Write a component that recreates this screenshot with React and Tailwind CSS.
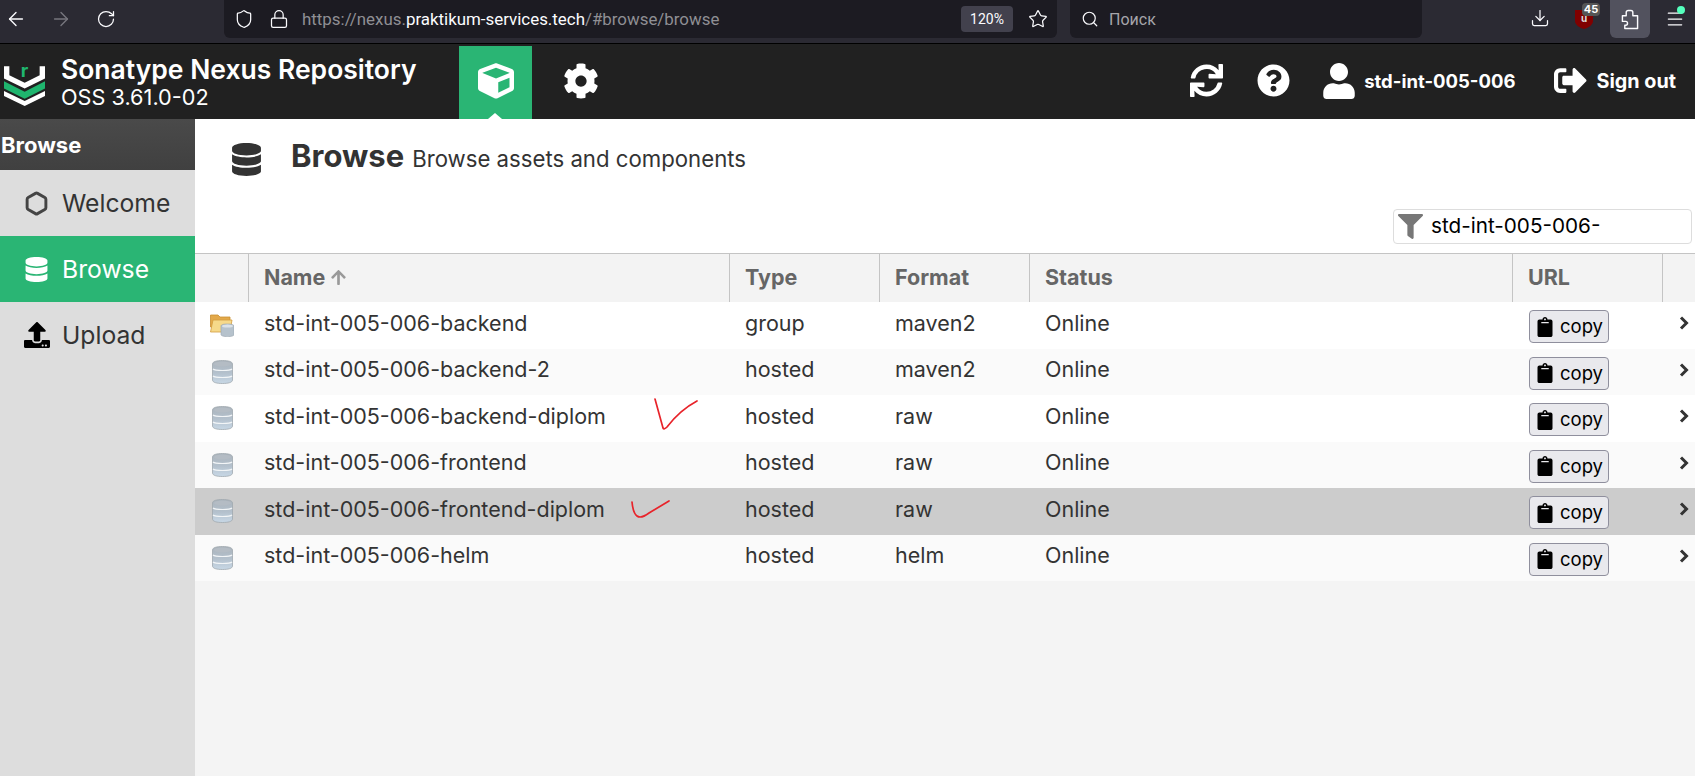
import React from "react";
import { ArrowLeft, ArrowRight, RotateCw, Shield, Lock, Star, Search, Download, Menu, Hexagon } from "lucide-react";
import { FaCube, FaCog, FaSync, FaQuestionCircle, FaUser, FaSignOutAlt, FaDatabase, FaUpload, FaFilter, FaClipboard, FaArrowUp } from "react-icons/fa";

const rows = [
  { name: "std-int-005-006-backend", type: "group", format: "maven2", bg: "bg-white", folder: true },
  { name: "std-int-005-006-backend-2", type: "hosted", format: "maven2", bg: "bg-[#fafafa]" },
  { name: "std-int-005-006-backend-diplom", type: "hosted", format: "raw", bg: "bg-white", check: 1 },
  { name: "std-int-005-006-frontend", type: "hosted", format: "raw", bg: "bg-[#fafafa]" },
  { name: "std-int-005-006-frontend-diplom", type: "hosted", format: "raw", bg: "bg-[#cccccc]", check: 2 },
  { name: "std-int-005-006-helm", type: "hosted", format: "helm", bg: "bg-[#fafafa]" },
];

function Logo() {
  return (
    <svg viewBox="12 185 115 130" preserveAspectRatio="none" className="w-[41px] h-[43px] mt-[5px] overflow-visible">
      <polygon fill="#fff" points="12,195 27,195 27,222 70,245 112,222 112,195 127,195 127,232 70,262 12,232" />
      <polygon fill="#1fb56e" points="12,240 70,272 127,240 127,262 70,293 12,262" />
      <polygon fill="#fff" points="12,270 70,300 127,270 127,285 70,315 12,285" />
      <text x="59" y="226" fontSize="52" fontWeight="700" fill="#1fb56e" fontFamily="Inter, sans-serif">r</text>
    </svg>
  );
}

function DbIcon() {
  return (
    <svg viewBox="0 0 21 24" className="w-[21px] h-[24px]">
      <defs>
        <linearGradient id="dbg" x1="0" y1="0" x2="0" y2="1">
          <stop offset="0" stopColor="#aab3bb" />
          <stop offset="0.55" stopColor="#b4c1cd" />
          <stop offset="1" stopColor="#c8d8e6" />
        </linearGradient>
      </defs>
      <path d="M0.5 4C0.5 1.5 5 0.5 10.5 0.5S20.5 1.5 20.5 4V20C20.5 22.5 16 23.5 10.5 23.5S0.5 22.5 0.5 20Z" fill="url(#dbg)" stroke="#a0a8ae" strokeWidth="0.8" />
      <path d="M1 9C3 11 18 11 20 9M1 16C3 18 18 18 20 16" fill="none" stroke="#f2f5f7" strokeWidth="1.2" />
      <ellipse cx="10.5" cy="4" rx="8.5" ry="2.4" fill="#b4bcc4" />
    </svg>
  );
}

function FolderIcon() {
  return (
    <svg viewBox="0 0 24 24" className="w-[24px] h-[24px]">
      <path d="M0.5 2H8L10 4H20V14H0.5Z" fill="#e3a94a" stroke="#c98f33" strokeWidth="0.8" />
      <path d="M0.5 19L3 7H22L20 19Z" fill="#f6d98a" stroke="#d39c3f" strokeWidth="0.8" />
      <path d="M11 13C11 11.5 14 11 17.5 11S24 11.5 24 13V21.5C24 23 21 23.6 17.5 23.6S11 23 11 21.5Z" fill="#b6c2cc" stroke="#98a4ae" strokeWidth="0.6" />
      <ellipse cx="17.5" cy="13" rx="5.5" ry="1.6" fill="#dbe2e8" />
    </svg>
  );
}

function Check({ kind }) {
  if (kind === 1) {
    return (
      <svg viewBox="0 0 50 40" className="absolute left-[455px] top-0 w-[50px] h-[40px]">
        <path d="M5 4L13 33Q14 35 17 32Q30 15 47 6" fill="none" stroke="#e8232a" strokeWidth="1.7" strokeLinecap="round" />
      </svg>
    );
  }
  return (
    <svg viewBox="0 0 50 40" className="absolute left-[430px] top-0 w-[50px] h-[40px]">
      <path d="M7 14Q8 25 12 28Q16 31 24 25Q34 19 44 13" fill="none" stroke="#e8232a" strokeWidth="1.7" strokeLinecap="round" />
    </svg>
  );
}

function Row({ r }) {
  return (
    <div className={`relative grid grid-cols-[53px_481px_150px_150px_483px_150px_1fr] h-[46.5px] text-[21.5px] text-[#333] ${r.bg}`}>
      <div className="flex items-center justify-center pl-px">{r.folder ? <FolderIcon /> : <DbIcon />}</div>
      <div className="flex items-center pl-4 pb-[5px]">{r.name}</div>
      <div className="flex items-center pl-4 pb-[5px]">{r.type}</div>
      <div className="flex items-center pl-4 pb-[5px]">{r.format}</div>
      <div className="flex items-center pl-4 pb-[5px]">Online</div>
      <div className="flex items-center pl-[17px] pt-[3px]">
        <button className="flex items-center justify-center gap-[5px] w-[80px] h-[33px] rounded bg-[#e9e9ed] border border-[#8f8f9d] text-black text-[18.5px]">
          <FaClipboard className="text-[20px]" />
          <span className="pt-px">copy</span>
        </button>
      </div>
      <div className="flex items-center justify-end pr-[6px] pb-[4px]">
        <svg viewBox="0 0 10 14" className="w-[10px] h-[14px]" fill="none" stroke="#333" strokeWidth="3">
          <polyline points="2,1.5 7.5,7 2,12.5" />
        </svg>
      </div>
      {r.check ? <Check kind={r.check} /> : null}
    </div>
  );
}

function NavItem({ icon, label, active }) {
  return (
    <div className={`flex items-center h-[66px] text-[24.7px] ${active ? "bg-[#2ab574] text-white" : "text-[#333]"}`}>
      <div className="w-[62px] flex justify-center pl-[11px]">{icon}</div>
      <span className="mt-[2px]">{label}</span>
    </div>
  );
}

export default function App() {
  return (
    <div className="w-[1695px] h-[776px] overflow-hidden flex flex-col bg-[#f4f4f4] font-['Inter',sans-serif]">
      {/* browser chrome */}
      <div className="h-[44px] shrink-0 bg-[#2b2a33] border-b border-black flex items-start text-[#fbfbfe]">
        <div className="w-[224px] h-[38px] flex items-center">
          <ArrowLeft className="ml-[5px] w-[22px] h-[22px]" strokeWidth={1.5} />
          <ArrowRight className="ml-[23px] w-[22px] h-[22px] text-[#77767e]" strokeWidth={1.5} />
          <RotateCw className="ml-[24px] w-[20px] h-[20px]" strokeWidth={1.5} />
        </div>
        <div className="w-[833px] h-[38px] bg-[#1c1b22] rounded-b-md flex items-center font-['Roboto',sans-serif]">
          <Shield className="ml-[10px] w-[20px] h-[20px]" strokeWidth={1.5} />
          <Lock className="ml-[15px] w-[20px] h-[20px]" strokeWidth={1.5} />
          <div className="ml-[13px] pt-px text-[16.9px] text-[#8f8f94] whitespace-nowrap">
            https://nexus.<span className="text-[#fbfbfe]">praktikum-services.tech</span>/#browse/browse
          </div>
          <div className="ml-auto w-[52px] h-[26px] rounded bg-[#42414d] flex items-center justify-center text-[14px]">120%</div>
          <Star className="ml-[15px] mr-[9px] w-[20px] h-[20px]" strokeWidth={1.5} />
        </div>
        <div className="ml-[13px] w-[352px] h-[38px] bg-[#1c1b22] rounded-b-md flex items-center font-['Roboto',sans-serif]">
          <Search className="ml-[11px] w-[18px] h-[18px]" strokeWidth={1.6} />
          <span className="ml-[10px] pt-px text-[16px] text-[#a5a5aa]">Поиск</span>
        </div>
        <div className="flex-1 relative h-[38px] flex items-center">
          <Download className="absolute left-[108px] top-[8px] w-[20px] h-[20px]" strokeWidth={1.5} />
          <svg viewBox="0 0 20 22" className="absolute left-[152px] top-[8px] w-[20px] h-[22px]">
            <path d="M1 2H19V13C19 17 14 20 10 21C6 20 1 17 1 13Z" fill="#800000" />
            <text x="10" y="14" fontSize="10" fontWeight="700" textAnchor="middle" fill="#ddd">u</text>
          </svg>
          <div className="absolute left-[160px] top-[3px] w-[18px] h-[13px] rounded-sm bg-[#555] text-white text-[11px] font-bold leading-[13px] text-center">45</div>
          <div className="absolute left-[188px] top-0 w-[40px] h-[38px] rounded-b-md bg-[#52525e] flex items-center justify-center">
            <svg viewBox="0 0 19 22" className="w-[18px] h-[21px]" fill="none" stroke="currentColor" strokeWidth="1.5" strokeLinejoin="round">
              <path d="M4 20.5H17.5V7H12.5V3.5A2 2 0 0 0 10.5 1.5H7.5A2 2 0 0 0 5.5 3.5V7H1.5V13H5C7.5 13 7.5 17 5 17H4Z" />
            </svg>
          </div>
          <Menu className="absolute left-[243px] top-[9px] w-[20px] h-[20px]" strokeWidth={1.5} />
          <div className="absolute left-[255px] top-[6px] w-[8px] h-[8px] rounded-full bg-[#54ffbd]" />
        </div>
      </div>

      {/* app header */}
      <div className="h-[75px] shrink-0 bg-[#212121] flex text-white">
        <div className="w-[459px] flex items-center pl-1">
          <Logo />
          <div className="ml-4 mt-[-1px]">
            <div className="text-[26.5px] font-semibold leading-[32px] whitespace-nowrap">Sonatype Nexus Repository</div>
            <div className="text-[21.7px] leading-[25px]">OSS 3.61.0-02</div>
          </div>
        </div>
        <div className="relative mt-[2px] pb-[3px] w-[73px] bg-[#2ab574] flex items-center justify-center">
          <FaCube className="text-[36px]" />
          <div className="absolute bottom-0 left-[29px] w-0 h-0 border-x-[7px] border-x-transparent border-b-[6px] border-b-white" />
        </div>
        <div className="ml-[31px] pb-[2px] flex items-center">
          <FaCog className="text-[36px]" />
        </div>
        <div className="ml-auto flex items-center pr-[19px] font-bold">
          <FaSync className="text-[33px] mb-[2px]" />
          <FaQuestionCircle className="ml-[34px] text-[33px] mb-[2px]" />
          <FaUser className="ml-[31px] text-[36px] mb-[2px]" />
          <span className="ml-[7px] text-[18.5px]">std-int-005-006</span>
          <FaSignOutAlt className="ml-[39px] text-[33px] mb-[2px]" />
          <span className="ml-[9px] text-[19.8px]">Sign out</span>
        </div>
      </div>

      <div className="flex-1 flex min-h-0">
        {/* sidebar */}
        <div className="w-[195px] shrink-0 bg-[#dddddd]">
          <div className="h-[51px] flex items-center pl-px pt-px bg-gradient-to-b from-[#4a4a4a] to-[#404040] text-white font-bold text-[22px]">Browse</div>
          <NavItem label="Welcome" icon={<Hexagon className="w-[25px] h-[25px] text-[#444]" strokeWidth={2.8} />} />
          <NavItem active label="Browse" icon={<FaDatabase className="text-[25px]" />} />
          <NavItem label="Upload" icon={<FaUpload className="text-[26px] text-black" />} />
        </div>

        {/* main */}
        <div className="flex-1 min-w-0">
          <div className="h-[134px] bg-white relative">
            <div className="flex items-center pt-[20px]">
              <FaDatabase className="ml-[35px] text-[33px] text-[#333]" />
              <div className="ml-[28px] flex items-baseline text-[#333] mt-[-6px]">
                <span className="text-[31px] font-bold">Browse</span>
                <span className="ml-[8px] text-[22.2px]">Browse assets and components</span>
              </div>
            </div>
            <div className="flex justify-end pr-[3px] mt-[29px]">
              <div className="w-[299px] h-[35px] bg-white border border-[#dddddd] rounded flex items-center">
                <FaFilter className="ml-[4px] text-[25px] text-[#777]" />
                <span className="ml-[8px] text-[20.7px] text-black">std-int-005-006-</span>
              </div>
            </div>
          </div>
          <div className="h-[49px] bg-[#f3f3f3] border-t border-[#c4c4c4] grid grid-cols-[53px_481px_150px_150px_483px_150px_1fr] text-[21.5px] font-bold text-[#666]">
            <div />
            <div className="border-l border-[#c4c4c4] flex items-center pl-[15px] pb-px">
              Name <FaArrowUp className="ml-[5px] text-[17px] text-[#999]" />
            </div>
            <div className="border-l border-[#c4c4c4] flex items-center pl-[15px] pb-px">Type</div>
            <div className="border-l border-[#c4c4c4] flex items-center pl-[15px] pb-px">Format</div>
            <div className="border-l border-[#c4c4c4] flex items-center pl-[15px] pb-px">Status</div>
            <div className="border-l border-[#c4c4c4] flex items-center pl-[15px] pb-px">URL</div>
            <div className="border-l border-[#c4c4c4]" />
          </div>
          {rows.map((r) => <Row key={r.name} r={r} />)}
        </div>
      </div>
    </div>
  );
}
